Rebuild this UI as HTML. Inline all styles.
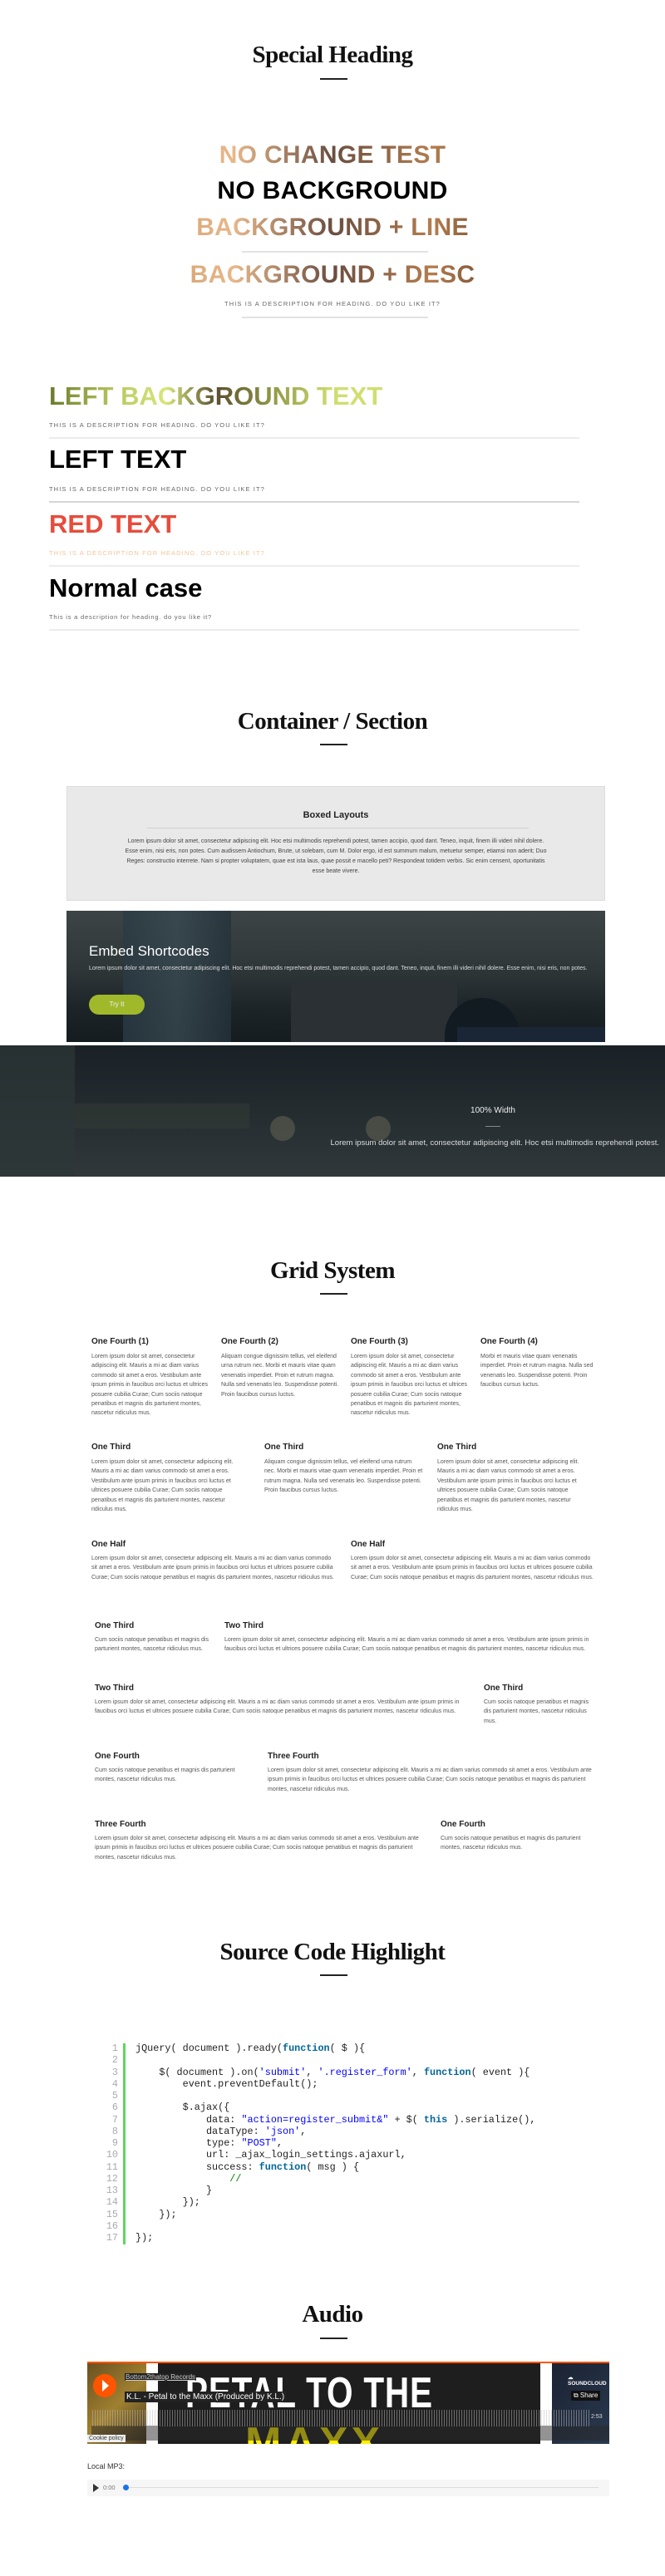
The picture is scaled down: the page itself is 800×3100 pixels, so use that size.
<!DOCTYPE html>
<html><head><meta charset="utf-8">
<style>
*{margin:0;padding:0;box-sizing:border-box}
body{width:800px;height:3100px;background:#fff;position:relative;font-family:"Liberation Sans",Arial,sans-serif;color:#333;overflow:hidden}
.a{position:absolute}
.sh{position:absolute;left:0;width:800px;text-align:center;font-family:"Liberation Serif",serif;font-weight:bold;font-size:29px;line-height:30px;color:#111;letter-spacing:-0.5px}
.bar{position:absolute;left:385px;width:33px;height:2px;background:#222}
.big{position:absolute;left:0;width:800px;text-align:center;font-weight:bold;font-size:30px;line-height:30px;letter-spacing:0.3px}
.tex{background:linear-gradient(90deg,#7a5a3c,#c99565 20%,#e8b88a 35%,#6a4e40 50%,#b47d4f 65%,#4a3020 80%,#c48a58);-webkit-background-clip:text;background-clip:text;color:transparent}
.desc{font-size:7.5px;letter-spacing:1.1px;color:#666;text-transform:uppercase}
.hl{position:absolute;height:2px;background:#e2e2e2}
.lt{position:absolute;left:59px;font-weight:bold;font-size:31px;line-height:30px}
.gh{position:absolute;font-size:10px;font-weight:bold;color:#222;line-height:12px}
.gp{position:absolute;font-size:7px;line-height:11.4px;color:#555}
.code{position:absolute;left:163px;top:2458px;font-family:"Liberation Mono",monospace;font-size:11.8px;line-height:14.26px;color:#222;white-space:pre}
.ln{position:absolute;left:120px;top:2458px;width:22px;text-align:right;font-family:"Liberation Mono",monospace;font-size:11.8px;line-height:14.26px;color:#aaa;white-space:pre}
.k{color:#006699;font-weight:bold}.s{color:#0000ff}.c{color:#008200}
</style></head><body>

<div class="sh" style="top:51px">Special Heading</div>
<div class="bar" style="top:94px"></div>

<div class="big tex" style="top:172px">NO CHANGE TEST</div>
<div class="big" style="top:215px;color:#000">NO BACKGROUND</div>
<div class="big tex" style="top:259px">BACKGROUND + LINE</div>
<div class="hl" style="left:291px;width:224px;top:302px"></div>
<div class="big tex" style="top:316px">BACKGROUND + DESC</div>
<div class="a desc" style="left:0;width:800px;text-align:center;top:361px">This is a description for heading. Do you like it?</div>
<div class="hl" style="left:291px;width:224px;top:381px"></div>

<div class="lt" style="top:462px;background:linear-gradient(90deg,#6a7a2a,#b8c860 20%,#d8e67a 35%,#5a5030 50%,#8a9040 65%,#d0de70 85%);-webkit-background-clip:text;background-clip:text;color:transparent">LEFT BACKGROUND TEXT</div>
<div class="a desc" style="left:59px;top:507px">This is a description for heading. Do you like it?</div>
<div class="hl" style="left:59px;width:638px;top:526px;background:#ececec"></div>
<div class="lt" style="top:538px;color:#000">LEFT TEXT</div>
<div class="a desc" style="left:59px;top:584px">This is a description for heading. Do you like it?</div>
<div class="hl" style="left:59px;width:638px;top:603px;background:#d5d5d5"></div>
<div class="lt" style="top:616px;color:#e74c3c">RED TEXT</div>
<div class="a desc" style="left:59px;top:661px;color:#f3c49a">This is a description for heading. Do you like it?</div>
<div class="hl" style="left:59px;width:638px;top:680px;background:#ececec"></div>
<div class="lt" style="top:693px;color:#000">Normal case</div>
<div class="a desc" style="left:59px;top:738px;text-transform:none;letter-spacing:0.8px">This is a description for heading. do you like it?</div>
<div class="hl" style="left:59px;width:638px;top:757px;background:#ececec"></div>

<div class="sh" style="top:853px">Container / Section</div>
<div class="bar" style="top:895px"></div>

<div class="a" style="left:80px;top:946px;width:648px;height:138px;background:#e9e9e9;border:1px solid #dcdcdc"></div>
<div class="a" style="left:80px;width:648px;top:975px;text-align:center;font-size:11px;font-weight:bold;color:#222">Boxed Layouts</div>
<div class="a" style="left:177px;top:996px;width:459px;height:1px;background:#cfcfcf"></div>
<div class="a" style="left:147px;top:1007px;width:514px;text-align:center;font-size:7px;line-height:12px;color:#444">Lorem ipsum dolor sit amet, consectetur adipiscing elit. Hoc etsi multimodis reprehendi potest, tamen accipio, quod dant. Teneo, inquit, finem illi videri nihil dolere. Esse enim, nisi eris, non potes. Cum audissem Antiochum, Brute, ut solebam, cum M. Dolor ergo, id est summum malum, metuetur semper, etiamsi non aderit; Duo Reges: constructio interrete. Nam si propter voluptatem, quae est ista laus, quae possit e macello peti? Respondeat totidem verbis. Sic enim censent, oportunitatis esse beate vivere.</div>

<div class="a" style="left:80px;top:1096px;width:648px;height:158px;background:linear-gradient(180deg,#3c4446 0%,#2e3638 45%,#1c2428 75%,#141c20 100%);overflow:hidden">
 <div class="a" style="left:68px;top:0;width:130px;height:158px;background:linear-gradient(90deg,#2a3a44,#384850,#24323a);opacity:.8"></div>
 <div class="a" style="left:270px;top:85px;width:200px;height:73px;background:#2a3034"></div>
 <div class="a" style="left:455px;top:105px;width:90px;height:80px;border-radius:45px 45px 0 0;background:#121a22"></div>
 <div class="a" style="left:470px;top:140px;width:178px;height:30px;background:#1a2636"></div>
</div>
<div class="a" style="left:107px;top:1135px;font-size:17px;color:#fff">Embed Shortcodes</div>
<div class="a" style="left:107px;top:1160px;width:600px;font-size:7px;line-height:12px;color:#ddd">Lorem ipsum dolor sit amet, consectetur adipiscing elit. Hoc etsi multimodis reprehendi potest, tamen accipio, quod dant. Teneo, inquit, finem illi videri nihil dolere. Esse enim, nisi eris, non potes.</div>
<div class="a" style="left:107px;top:1197px;width:67px;height:24px;border-radius:12px;background:#a0b92b;color:#eef;font-size:8px;text-align:center;line-height:24px">Try It</div>

<div class="a" style="left:0;top:1258px;width:800px;height:158px;background:linear-gradient(180deg,#1a2126,#242c30 50%,#30383a);overflow:hidden">
 <div class="a" style="left:0;top:0;width:90px;height:158px;background:#2e3838;opacity:.7"></div>
 <div class="a" style="left:90px;top:70px;width:210px;height:30px;background:#3a4238;opacity:.4"></div>
 <div class="a" style="left:325px;top:85px;width:30px;height:30px;border-radius:15px;background:#6a6a58;opacity:.5"></div>
 <div class="a" style="left:440px;top:85px;width:30px;height:30px;border-radius:15px;background:#6a6a58;opacity:.5"></div>
</div>
<div class="a" style="left:543px;width:100px;text-align:center;top:1331px;font-size:10px;color:#eee">100% Width</div>
<div class="a" style="left:584px;top:1355px;width:18px;height:1px;background:#888"></div>
<div class="a" style="left:340px;width:453px;text-align:right;top:1370px;font-size:9.5px;color:#ddd;white-space:nowrap">Lorem ipsum dolor sit amet, consectetur adipiscing elit. Hoc etsi multimodis reprehendi potest.</div>

<div class="sh" style="top:1514px">Grid System</div>
<div class="bar" style="top:1556px"></div>

<div class="gh" style="left:110px;top:1609px">One Fourth (1)</div>
<div class="gp" style="left:110px;top:1627px;width:142px">Lorem ipsum dolor sit amet, consectetur adipiscing elit. Mauris a mi ac diam varius commodo sit amet a eros. Vestibulum ante ipsum primis in faucibus orci luctus et ultrices posuere cubilia Curae; Cum sociis natoque penatibus et magnis dis parturient montes, nascetur ridiculus mus.</div>
<div class="gh" style="left:266px;top:1609px">One Fourth (2)</div>
<div class="gp" style="left:266px;top:1627px;width:142px">Aliquam congue dignissim tellus, vel eleifend urna rutrum nec. Morbi et mauris vitae quam venenatis imperdiet. Proin et rutrum magna. Nulla sed venenatis leo. Suspendisse potenti. Proin faucibus cursus luctus.</div>
<div class="gh" style="left:422px;top:1609px">One Fourth (3)</div>
<div class="gp" style="left:422px;top:1627px;width:142px">Lorem ipsum dolor sit amet, consectetur adipiscing elit. Mauris a mi ac diam varius commodo sit amet a eros. Vestibulum ante ipsum primis in faucibus orci luctus et ultrices posuere cubilia Curae; Cum sociis natoque penatibus et magnis dis parturient montes, nascetur ridiculus mus.</div>
<div class="gh" style="left:578px;top:1609px">One Fourth (4)</div>
<div class="gp" style="left:578px;top:1627px;width:142px">Morbi et mauris vitae quam venenatis imperdiet. Proin et rutrum magna. Nulla sed venenatis leo. Suspendisse potenti. Proin faucibus cursus luctus.</div>

<div class="gh" style="left:110px;top:1736px">One Third</div>
<div class="gp" style="left:110px;top:1754px;width:186px">Lorem ipsum dolor sit amet, consectetur adipiscing elit. Mauris a mi ac diam varius commodo sit amet a eros. Vestibulum ante ipsum primis in faucibus orci luctus et ultrices posuere cubilia Curae; Cum sociis natoque penatibus et magnis dis parturient montes, nascetur ridiculus mus.</div>
<div class="gh" style="left:318px;top:1736px">One Third</div>
<div class="gp" style="left:318px;top:1754px;width:192px">Aliquam congue dignissim tellus, vel eleifend urna rutrum nec. Morbi et mauris vitae quam venenatis imperdiet. Proin et rutrum magna. Nulla sed venenatis leo. Suspendisse potenti. Proin faucibus cursus luctus.</div>
<div class="gh" style="left:526px;top:1736px">One Third</div>
<div class="gp" style="left:526px;top:1754px;width:186px">Lorem ipsum dolor sit amet, consectetur adipiscing elit. Mauris a mi ac diam varius commodo sit amet a eros. Vestibulum ante ipsum primis in faucibus orci luctus et ultrices posuere cubilia Curae; Cum sociis natoque penatibus et magnis dis parturient montes, nascetur ridiculus mus.</div>

<div class="gh" style="left:110px;top:1853px">One Half</div>
<div class="gp" style="left:110px;top:1870px;width:292px">Lorem ipsum dolor sit amet, consectetur adipiscing elit. Mauris a mi ac diam varius commodo sit amet a eros. Vestibulum ante ipsum primis in faucibus orci luctus et ultrices posuere cubilia Curae; Cum sociis natoque penatibus et magnis dis parturient montes, nascetur ridiculus mus.</div>
<div class="gh" style="left:422px;top:1853px">One Half</div>
<div class="gp" style="left:422px;top:1870px;width:292px">Lorem ipsum dolor sit amet, consectetur adipiscing elit. Mauris a mi ac diam varius commodo sit amet a eros. Vestibulum ante ipsum primis in faucibus orci luctus et ultrices posuere cubilia Curae; Cum sociis natoque penatibus et magnis dis parturient montes, nascetur ridiculus mus.</div>

<div class="gh" style="left:114px;top:1951px">One Third</div>
<div class="gp" style="left:114px;top:1968px;width:138px">Cum sociis natoque penatibus et magnis dis parturient montes, nascetur ridiculus mus.</div>
<div class="gh" style="left:270px;top:1951px">Two Third</div>
<div class="gp" style="left:270px;top:1968px;width:442px">Lorem ipsum dolor sit amet, consectetur adipiscing elit. Mauris a mi ac diam varius commodo sit amet a eros. Vestibulum ante ipsum primis in faucibus orci luctus et ultrices posuere cubilia Curae; Cum sociis natoque penatibus et magnis dis parturient montes, nascetur ridiculus mus.</div>

<div class="gh" style="left:114px;top:2026px">Two Third</div>
<div class="gp" style="left:114px;top:2043px;width:442px">Lorem ipsum dolor sit amet, consectetur adipiscing elit. Mauris a mi ac diam varius commodo sit amet a eros. Vestibulum ante ipsum primis in faucibus orci luctus et ultrices posuere cubilia Curae; Cum sociis natoque penatibus et magnis dis parturient montes, nascetur ridiculus mus.</div>
<div class="gh" style="left:582px;top:2026px">One Third</div>
<div class="gp" style="left:582px;top:2043px;width:134px">Cum sociis natoque penatibus et magnis dis parturient montes, nascetur ridiculus mus.</div>

<div class="gh" style="left:114px;top:2108px">One Fourth</div>
<div class="gp" style="left:114px;top:2125px;width:186px">Cum sociis natoque penatibus et magnis dis parturient montes, nascetur ridiculus mus.</div>
<div class="gh" style="left:322px;top:2108px">Three Fourth</div>
<div class="gp" style="left:322px;top:2125px;width:394px">Lorem ipsum dolor sit amet, consectetur adipiscing elit. Mauris a mi ac diam varius commodo sit amet a eros. Vestibulum ante ipsum primis in faucibus orci luctus et ultrices posuere cubilia Curae; Cum sociis natoque penatibus et magnis dis parturient montes, nascetur ridiculus mus.</div>

<div class="gh" style="left:114px;top:2190px">Three Fourth</div>
<div class="gp" style="left:114px;top:2207px;width:396px">Lorem ipsum dolor sit amet, consectetur adipiscing elit. Mauris a mi ac diam varius commodo sit amet a eros. Vestibulum ante ipsum primis in faucibus orci luctus et ultrices posuere cubilia Curae; Cum sociis natoque penatibus et magnis dis parturient montes, nascetur ridiculus mus.</div>
<div class="gh" style="left:530px;top:2190px">One Fourth</div>
<div class="gp" style="left:530px;top:2207px;width:182px">Cum sociis natoque penatibus et magnis dis parturient montes, nascetur ridiculus mus.</div>

<div class="sh" style="top:2334px">Source Code Highlight</div>
<div class="bar" style="top:2376px"></div>

<div class="a" style="left:148px;top:2459px;width:3px;height:242px;background:#5cd65c"></div>
<div class="ln">1
2
3
4
5
6
7
8
9
10
11
12
13
14
15
16
17</div>
<div class="code">jQuery( document ).ready(<span class="k">function</span>( $ ){

    $( document ).on(<span class="s">'submit'</span>, <span class="s">'.register_form'</span>, <span class="k">function</span>( event ){
        event.preventDefault();

        $.ajax({
            data: <span class="s">"action=register_submit&amp;"</span> + $( <span class="k">this</span> ).serialize(),
            dataType: <span class="s">'json'</span>,
            type: <span class="s">"POST"</span>,
            url: _ajax_login_settings.ajaxurl,
            success: <span class="k">function</span>( msg ) {
                <span class="c">//</span>
            }
        });
    });

});</div>

<div class="sh" style="top:2770px">Audio</div>
<div class="bar" style="top:2813px"></div>

<div class="a" style="left:105px;top:2842px;width:628px;height:99px;background:#2a2a28;overflow:hidden;border-top:2px solid #ff5500">
 <div class="a" style="left:0;top:0;width:75px;height:99px;background:linear-gradient(135deg,#6a5020,#a08030 50%,#3a3020)"></div>
 <div class="a" style="left:75px;top:0;width:470px;height:99px;background:#1e1e1e"></div>
 <div class="a" style="left:545px;top:0;width:83px;height:99px;background:linear-gradient(135deg,#1a2030,#2a3a50)"></div>
 <div class="a" style="left:71px;top:0;width:14px;height:99px;background:#fff"></div>
 <div class="a" style="left:545px;top:0;width:14px;height:99px;background:#fff"></div>
 <div class="a" style="left:118px;top:10px;font-family:'Liberation Sans',sans-serif;font-weight:bold;font-size:52px;line-height:52px;color:#fff;letter-spacing:1px;transform:scaleX(0.78);transform-origin:left">PETAL TO THE</div>
 <div class="a" style="left:190px;top:70px;font-weight:bold;font-size:52px;line-height:52px;color:#ffef00;letter-spacing:4px">MAXX</div>
 <div class="a" style="left:5px;top:75px;width:623px;height:18px;background:rgba(40,40,40,.5)"></div>
 <div class="a" style="left:6px;top:56px;width:600px;height:20px;background:repeating-linear-gradient(90deg,#bbb 0 1px,transparent 1px 3px);opacity:.5"></div>
 <div class="a" style="left:7px;top:13px;width:28px;height:28px;border-radius:14px;background:#ff5500"></div>
 <div class="a" style="left:18px;top:20px;width:0;height:0;border-left:8px solid #fff;border-top:7px solid transparent;border-bottom:7px solid transparent"></div>
 <div class="a" style="left:45px;top:12px;font-size:8px;color:#ccc;background:#222;padding:0 1px;text-decoration:underline">Bottom2thatop Records</div>
 <div class="a" style="left:45px;top:34px;font-size:10px;color:#fff;background:#222;padding:1px 2px">K.L. - Petal to the Maxx (Produced by K.L.)</div>
 <div class="a" style="left:578px;top:13px;font-size:6.5px;font-weight:bold;color:#fff">☁ SOUNDCLOUD</div>
 <div class="a" style="left:582px;top:33px;font-size:8px;color:#fff;background:#111;padding:1px 3px">⧉ Share</div>
 <div class="a" style="left:606px;top:61px;font-size:7px;color:#ddd">2:53</div>
 <div class="a" style="left:0;top:86px;font-size:7px;color:#333;background:#eee;padding:1px 2px">Cookie policy</div>
</div>

<div class="a" style="left:105px;top:2963px;font-size:9px;color:#333">Local MP3:</div>
<div class="a" style="left:105px;top:2984px;width:628px;height:20px;background:#f6f6f6"></div>
<div class="a" style="left:112px;top:2989px;width:0;height:0;border-left:7px solid #333;border-top:5px solid transparent;border-bottom:5px solid transparent"></div>
<div class="a" style="left:124px;top:2989px;font-size:7.5px;color:#777">0:00</div>
<div class="a" style="left:150px;top:2993px;width:570px;height:1px;background:#ddd"></div>
<div class="a" style="left:148px;top:2990px;width:7px;height:7px;border-radius:4px;background:#1a73e8"></div>

</body></html>
